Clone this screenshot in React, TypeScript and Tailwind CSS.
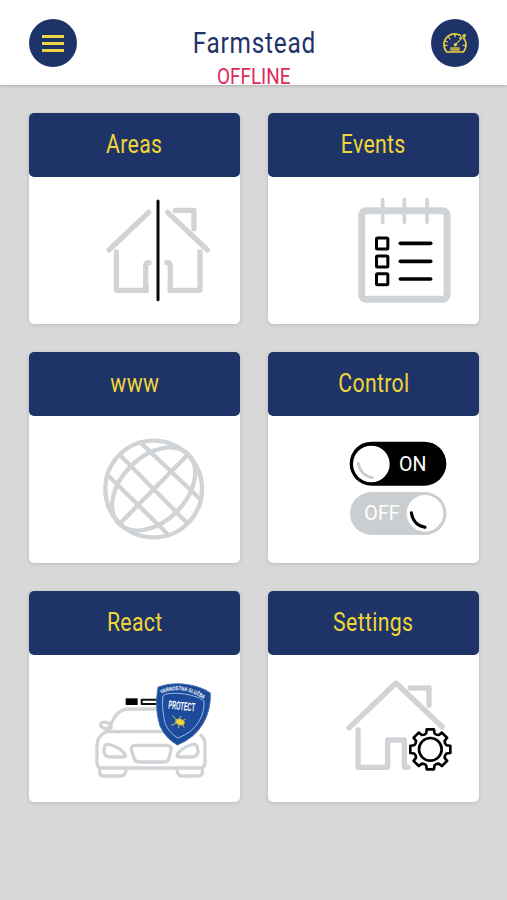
import type { ReactNode } from "react";

const GREY = "#d1d4d7";

function IconFrame({ viewBox, children }: { viewBox: string; children: ReactNode }) {
  return (
    <svg viewBox={viewBox} className="block h-full w-full" fill="none" strokeLinecap="round" strokeLinejoin="round">
      {children}
    </svg>
  );
}

function AreasIcon() {
  return (
    <IconFrame viewBox="-183 -24 633 441">
      <g stroke={GREY} strokeWidth="16">
        <path d="M176 82 57 195" />
        <path d="M79 201V316H167V242Q167 233 177 233" />
        <path d="M233 82 352 195" />
        <path d="M256 76H312V131" />
        <path d="M330 201V316H241V242Q241 233 231 233" />
        <path d="M168 308v8M241 308v8" strokeLinecap="square" />
      </g>
      <path d="M204 48V344" stroke="#080808" strokeWidth="9" />
    </IconFrame>
  );
}

function EventsIcon() {
  return (
    <IconFrame viewBox="-216 -24 633 441">
      <rect x="65" y="77" width="256" height="266" rx="13" stroke={GREY} strokeWidth="21" />
      <path d="M128 43V112M193 43V112M261 43V112" stroke={GREY} strokeWidth="11" />
      {[175, 229, 282].map((y) => (
        <g key={y} stroke="#000">
          <rect x="109.500" y={y - 16} width="34" height="33" rx="3" strokeWidth="9" />
          <path d={`M181 ${y}H272`} strokeWidth="11" />
        </g>
      ))}
    </IconFrame>
  );
}

function GlobeIcon() {
  return (
    <IconFrame viewBox="-183 -27 633 441">
      <g stroke={GREY} strokeWidth="13">
        <circle cx="191" cy="192" r="145" />
        <ellipse cx="191" cy="192" rx="147" ry="97" transform="rotate(-45 191 192)" />
        <path d="M92 293 292 91M90 90 289 292M155 56 327 219M56 153 230 324" />
      </g>
    </IconFrame>
  );
}

function ControlIcon() {
  return (
    <IconFrame viewBox="-201 -42 633 441">
      <rect x="44" y="35" width="290" height="132" rx="66" fill="#000" />
      <circle cx="109" cy="102" r="55" fill="#fff" />
      <path d="M70 100Q76 137 112 143" stroke="#c9cccf" strokeWidth="8" />
      <text x="192" y="123" fontFamily="Roboto, sans-serif" fontSize="59" textLength="82" lengthAdjust="spacingAndGlyphs" fill="#fff">ON</text>
      <rect x="45" y="186" width="289" height="129" rx="64.500" fill="#cbced1" />
      <circle cx="270" cy="250" r="55" fill="#fff" />
      <path d="M229 248Q235 285 270 292" stroke="#000" strokeWidth="9" />
      <text x="88" y="271" fontFamily="Roboto, sans-serif" fontSize="59" textLength="106" lengthAdjust="spacingAndGlyphs" fill="#fff">OFF</text>
    </IconFrame>
  );
}

function ReactIcon() {
  return (
    <IconFrame viewBox="-168 -45 633 441">
      <g stroke={GREY} strokeWidth="10">
        <path d="M64 185 88 143Q103 117 132 117H260Q296 117 309 143L331 185" />
        <path d="M79 165Q64 153 50 158Q42 165 53 173Q64 178 79 174" />
        <path d="M64 185H331M64 185Q36 199 36 224V278Q36 294 52 294H342Q360 294 360 278V224Q360 207 348 196" />
        <path d="M44 294V307Q44 318 56 318H109Q121 318 124 296M275 296Q278 318 290 318H339Q352 318 352 307V294" />
        <path d="M59 229Q62 220 79 225Q108 235 121 254Q124 261 111 261H78Q57 261 57 243Z" />
        <path d="M336 229Q333 220 316 225Q288 235 277 254Q275 261 286 261H319Q339 261 339 243Z" />
        <path d="M151 226H244Q260 226 258 240L252 264Q249 276 235 276H163Q150 276 147 264L139 240Q137 226 151 226Z" />
      </g>
      <rect x="122" y="85" width="36" height="20" fill="#000" />
      <path d="M220 89H170V102H220" stroke="#111" strokeWidth="6" />
      <path d="M220 51Q265 35 314 45Q352 52 376 69Q378 120 354 161Q329 204 277 225Q241 204 225 168Q213 130 215 85Z" fill="#1c4b9b" stroke="#456daf" strokeWidth="3" />
      <path d="M233 83Q232 75 240 73Q278 65 319 76Q350 84 357 94Q359 126 342 154Q322 189 278 204Q251 187 241 161Q231 128 233 83Z" stroke="#9fb9de" strokeWidth="3" />
      <path id="shield-arc" d="M228 71Q292 43 362 91" />
      <text fontFamily="Liberation Sans, sans-serif" fontSize="17" fontWeight="700" fill="#fff">
        <textPath href="#shield-arc" textLength="135" lengthAdjust="spacingAndGlyphs">VARNOSTNA SLUŽBA</textPath>
      </text>
      <text transform="translate(249 116) rotate(6)" fontFamily="Liberation Sans, sans-serif" fontSize="36" fontWeight="700" textLength="80" lengthAdjust="spacingAndGlyphs" fill="#fff">PROTECT</text>
      <g stroke="#cdbf68" strokeWidth="3">
        <ellipse cx="285" cy="156" rx="13" ry="8" fill="#f9d72e" transform="rotate(20 285 156)" />
        <path d="M275 151 263 137M283 148 287 139M293 152 301 148M276 158 259 166M283 164 280 173M290 162 297 172" />
      </g>
    </IconFrame>
  );
}

function SettingsIcon() {
  const gear: string[] = [];
  for (let i = 0; i < 8; i++) {
    const base = (i * Math.PI) / 4;
    for (const [angle, radius] of [[-0.36, 48], [-0.25, 50], [-0.18, 61], [0.18, 61], [0.25, 50], [0.36, 48]]) {
      gear.push(`${(286 + radius * Math.cos(base + angle)).toFixed(1)},${(235 + radius * Math.sin(base + angle)).toFixed(1)}`);
    }
  }
  return (
    <IconFrame viewBox="-201 -48 633 441">
      <g stroke={GREY} strokeWidth="16">
        <path d="M42 171 183 36 322 168" />
        <path d="M226 51H282V103" />
        <path d="M69 177V289H158V207H208V289H219" />
      </g>
      <polygon points={gear.join(" ")} fill="#fff" stroke="#000" strokeWidth="8" />
      <circle cx="286" cy="235" r="34" stroke="#000" strokeWidth="8" />
    </IconFrame>
  );
}

function GaugeIcon() {
  return (
    <svg viewBox="531 57 144 144" className="h-12 w-12" fill="none" stroke="#ecd344" strokeLinecap="round" strokeLinejoin="round">
      <path d="M578 156H628Q637 145 636 130Q634 121 629 115M619 106Q600 97 584 107Q570 117 570 133Q570 147 578 156" strokeWidth="5" />
      <path d="M603 103V110M584 111 588 117M574 123 580 126M573 136H579M634 136H627M621 111 617 115" strokeWidth="4" />
      <path d="M604 134 634 104M626 106 634 104 632 112" strokeWidth="3.500" />
      <circle cx="604" cy="134" r="4.500" fill="#ecd344" strokeWidth="1" />
      <rect x="591" y="143" width="25" height="8" fill="#a79d49" strokeWidth="2" />
    </svg>
  );
}

const cards = [
  { title: "Areas", icon: <AreasIcon /> },
  { title: "Events", icon: <EventsIcon /> },
  { title: "www", icon: <GlobeIcon /> },
  { title: "Control", icon: <ControlIcon /> },
  { title: "React", icon: <ReactIcon /> },
  { title: "Settings", icon: <SettingsIcon /> },
];

export default function App() {
  return (
    <div className="flex h-[900px] w-[507px] flex-col overflow-hidden bg-[#d8d8d8] font-['Roboto',sans-serif]">
      <header className="flex h-[85px] shrink-0 items-start justify-between bg-white pr-7 pl-[29px] pt-[19px] shadow-[0_1px_3px_rgba(0,0,0,0.2)]">
        <button aria-label="Menu" className="flex h-12 w-12 flex-col items-center justify-center gap-[4px] rounded-full bg-[#1e3368]">
          <span className="h-[3px] w-[22px] bg-[#ecd344]" />
          <span className="h-[3px] w-[22px] bg-[#ecd344]" />
          <span className="h-[3px] w-[22px] bg-[#ecd344]" />
        </button>
        <div className="flex flex-col items-center pt-[7px]">
          <h1 className="scale-x-[0.84] text-[29px] leading-[34px] tracking-[0.9px] text-[#1e3368]">Farmstead</h1>
          <p className="scale-x-[0.86] text-[22px] leading-[34px] text-[#df2858]">OFFLINE</p>
        </div>
        <button aria-label="Dashboard" className="h-12 w-12 rounded-full bg-[#1e3368]">
          <GaugeIcon />
        </button>
      </header>
      <main className="grid grid-cols-[211px_211px] gap-7 px-[29px] pt-7">
        {cards.map(({ title, icon }) => (
          <section key={title} className="flex h-[211px] flex-col rounded-[5px] bg-white shadow-[0_1px_4px_rgba(0,0,0,0.14)]">
            <h2 className="flex h-16 items-center justify-center rounded-[5px] bg-[#1e3368] text-[25px] text-[#f0d638]">
              <span className="scale-x-[0.85] tracking-[0.4px]">{title}</span>
            </h2>
            <div className="h-[147px]">{icon}</div>
          </section>
        ))}
      </main>
    </div>
  );
}
